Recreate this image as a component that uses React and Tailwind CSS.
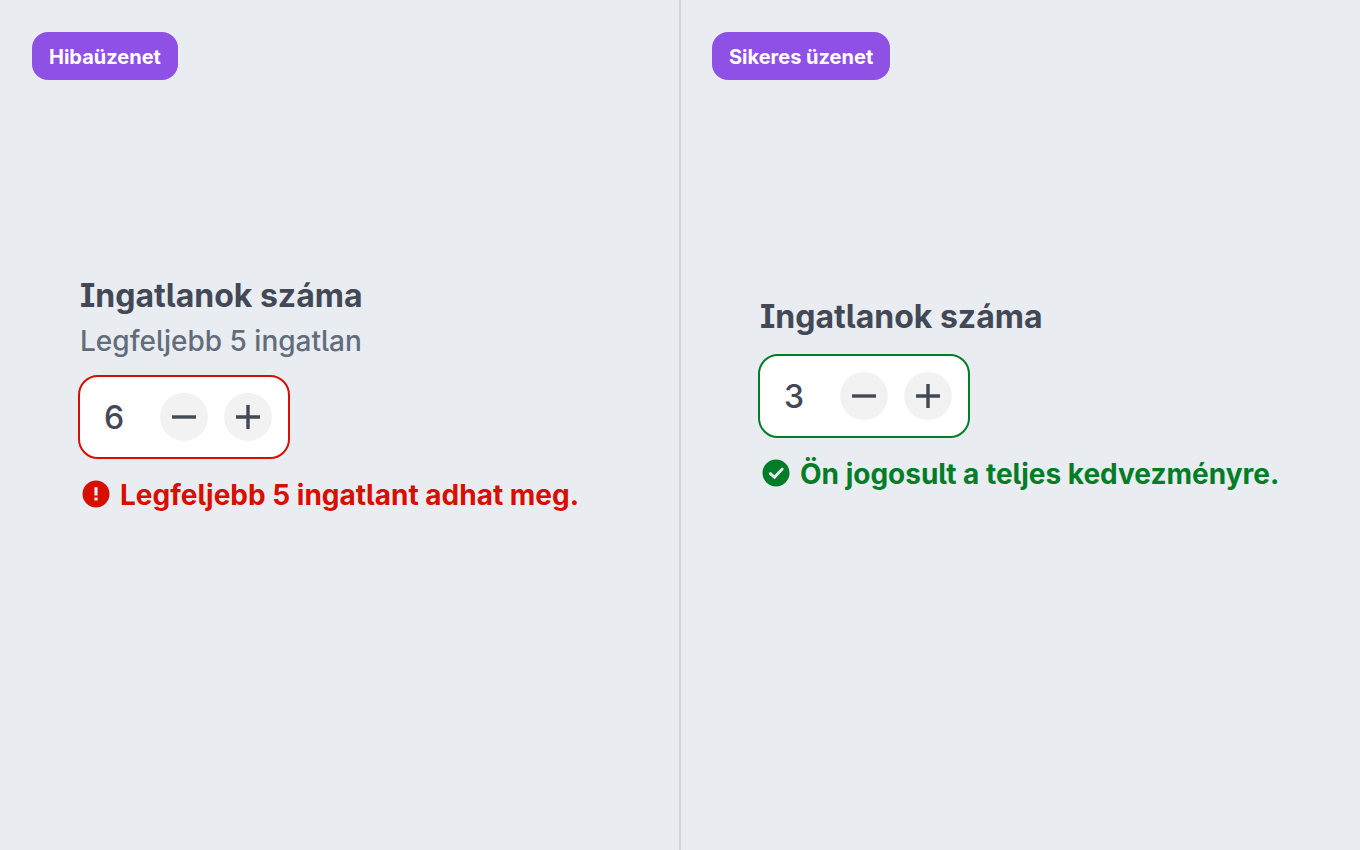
import React, { useState } from 'react';

const ErrorIcon = () => (
  <svg viewBox="0 0 32 32" className="-mt-0.5 w-8 h-8 shrink-0" aria-hidden="true">
    <circle cx="16" cy="16" r="13.5" fill="currentColor" />
    <path d="M14.4 9.2h3.2v8.2h-3.2zM14.4 19.4h3.2v3.2h-3.2z" fill="#e9ecf1" />
  </svg>
);

const SuccessIcon = () => (
  <svg viewBox="0 0 32 32" className="-mt-0.5 w-8 h-8 shrink-0" aria-hidden="true">
    <circle cx="16" cy="16" r="13.5" fill="currentColor" />
    <path
      d="M10.3 16.6l4.2 3.7L22.2 12"
      fill="none"
      stroke="#e9ecf1"
      strokeWidth="2.8"
      strokeLinecap="round"
    />
  </svg>
);

const StepButton = ({ label, path, onClick }) => (
  <button
    type="button"
    aria-label={label}
    onClick={onClick}
    className="w-12 h-12 rounded-full bg-[#f2f2f2] flex items-center justify-center"
  >
    <svg viewBox="0 0 24 24" className="w-6 h-6" aria-hidden="true">
      <path d={path} fill="none" stroke="currentColor" strokeWidth="3.4" />
    </svg>
  </button>
);

const NumberStepper = ({ id, label, hint, initial, status, message }) => {
  const [value, setValue] = useState(initial);
  const isError = status === 'error';

  return (
    <div className="text-[#424856] [font-feature-settings:'ss02']">
      <label htmlFor={id} className="block pb-0.5 text-[32px] leading-[38px] font-bold">
        {label}
      </label>
      {hint && (
        <p id={`${id}-hint`} className="mt-1.5 text-[28px] leading-9 font-medium text-[#626c7a]">
          {hint}
        </p>
      )}
      <div
        className={`mt-4 -ml-0.5 w-[212px] h-[84px] rounded-[20px] border-2 bg-white pl-6 pr-4 flex items-center gap-4 ${
          isError ? 'border-[#d60f00]' : 'border-[#007d26]'
        }`}
      >
        <input
          id={id}
          type="text"
          inputMode="numeric"
          value={value}
          onChange={(e) => setValue(Number(e.target.value) || 0)}
          aria-invalid={isError}
          aria-describedby={hint ? `${id}-hint ${id}-message` : `${id}-message`}
          className="flex-1 min-w-0 pt-0.5 text-[32px] leading-10 font-medium outline-none bg-transparent"
        />
        <StepButton label="Csökkentés" path="M0 12h24" onClick={() => setValue(value - 1)} />
        <StepButton label="Növelés" path="M0 12h24M12 0v24" onClick={() => setValue(value + 1)} />
      </div>
      <p
        id={`${id}-message`}
        className={`mt-4 flex items-center gap-2 text-[28px] leading-10 font-bold ${
          isError ? 'text-[#d60f00]' : 'text-[#007d26]'
        }`}
      >
        {isError ? <ErrorIcon /> : <SuccessIcon />}
        {message}
      </p>
    </div>
  );
};

const Panel = ({ title, className, children }) => (
  <section className={`flex flex-col items-start pr-8 pt-8 pb-[138px] ${className}`}>
    <h2 className="h-12 px-[17px] rounded-[16px] bg-[#8f50e6] text-white text-[20px] leading-[50px] font-bold">
      {title}
    </h2>
    <div className="flex-1 flex items-center pl-12">{children}</div>
  </section>
);

export default function App() {
  return (
    <main className="min-h-screen grid grid-cols-2 bg-[#e9ecf1] font-['Inter',sans-serif]">
      <Panel title="Hibaüzenet" className="pl-8">
        <NumberStepper
          id="properties-error"
          label="Ingatlanok száma"
          hint="Legfeljebb 5 ingatlan"
          initial={6}
          status="error"
          message="Legfeljebb 5 ingatlant adhat meg."
        />
      </Panel>
      <Panel title="Sikeres üzenet" className="-ml-px border-l-2 border-[#d1d5db] pl-[31px]">
        <NumberStepper
          id="properties-success"
          label="Ingatlanok száma"
          initial={3}
          status="success"
          message="Ön jogosult a teljes kedvezményre."
        />
      </Panel>
    </main>
  );
}
